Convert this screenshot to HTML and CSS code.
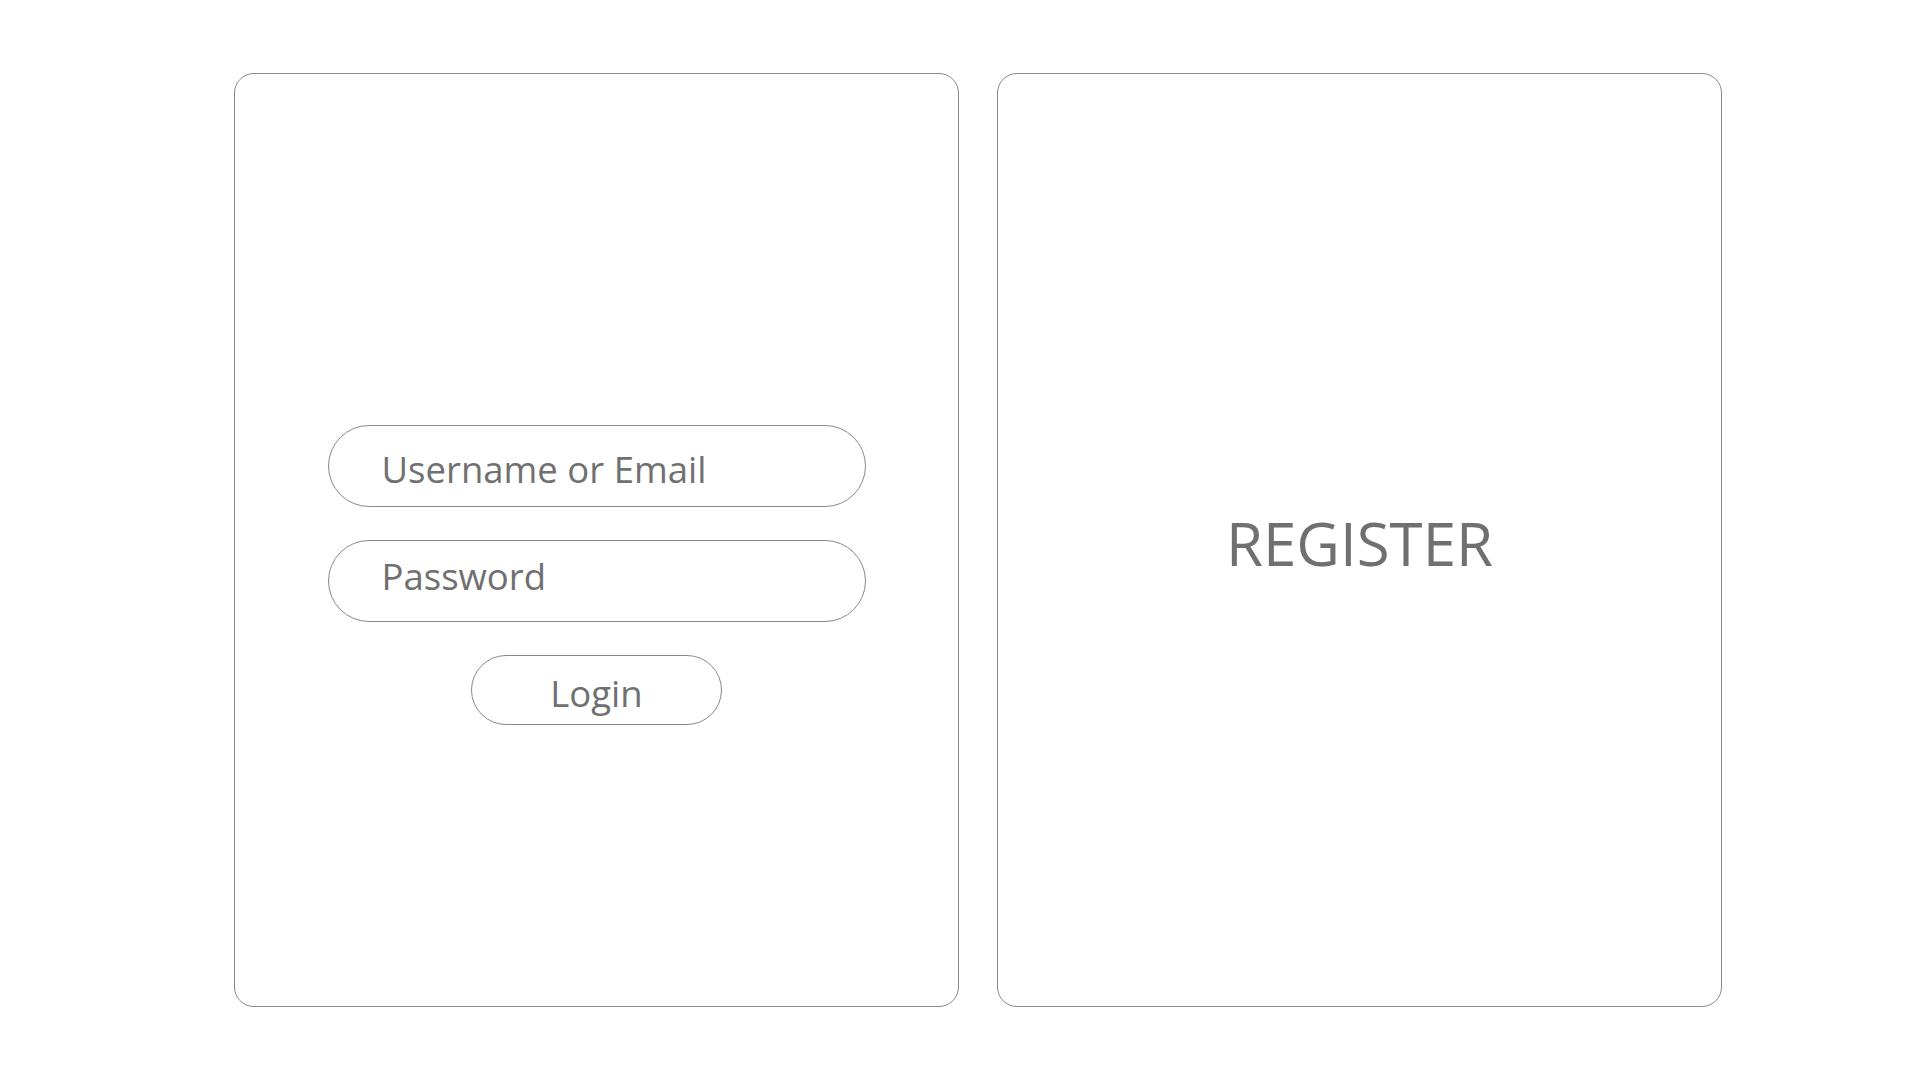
FILE: index.html
```html
<!DOCTYPE html>
<html lang="en">
<head>
<meta charset="utf-8">
<title>Login / Register</title>
<link rel="stylesheet" href="styles.css">
</head>
<body>
<main class="page">
  <section class="card login-card">
    <form class="login-form" onsubmit="return false;">
      <input class="field field-user" type="text" placeholder="Username or Email">
      <input class="field field-pass" type="password" placeholder="Password">
      <button class="login-btn" type="submit">Login</button>
    </form>
  </section>
  <section class="card register-card">
    <div class="register-label">REGISTER</div>
  </section>
</main>
</body>
</html>
```
FILE: styles.css
```css
* { box-sizing: border-box; }
html, body { margin: 0; padding: 0; background: #ffffff; }
body { font-family: "Open Sans", "Noto Sans", sans-serif; color: #707070; }

.page {
  display: flex;
  gap: 38px;
  padding: 73px 0 0 234px;
}

.card {
  width: 725px;
  height: 934px;
  border: 1px solid #888888;
  border-radius: 20px;
  background: #fff;
}

.login-card {
  display: flex;
  flex-direction: column;
  align-items: center;
  justify-content: center;
  padding-top: 70px;
}

.login-form {
  display: flex;
  flex-direction: column;
  align-items: center;
  gap: 33px;
}

.field {
  width: 538px;
  height: 82px;
  border: 1px solid #888888;
  border-radius: 41px;
  padding: 0 0 0 53px;
  font-family: inherit;
  font-size: 36.5px;
  color: #707070;
  background: #fff;
  outline: none;
}
.field-user { padding-top: 5px; }
.field-pass { padding-bottom: 10px; }
.field::placeholder { color: #707070; opacity: 1; }

.login-btn {
  width: 251px;
  height: 70px;
  border: 1px solid #888888;
  border-radius: 35px;
  background: #fff;
  font-family: inherit;
  font-size: 36.5px;
  color: #707070;
  padding: 5px 0 0 0;
  cursor: pointer;
}

.register-card {
  display: flex;
  align-items: center;
  justify-content: center;
}

.register-label {
  font-size: 60px;
  color: #707070;
  padding-top: 5px;
}
```
